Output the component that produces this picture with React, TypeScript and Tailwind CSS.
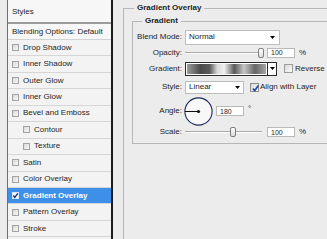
import React from 'react'

const items: { label: string; indent?: boolean; checked?: boolean }[] = [
  { label: 'Drop Shadow' },
  { label: 'Inner Shadow' },
  { label: 'Outer Glow' },
  { label: 'Inner Glow' },
  { label: 'Bevel and Emboss' },
  { label: 'Contour', indent: true },
  { label: 'Texture', indent: true },
  { label: 'Satin' },
  { label: 'Color Overlay' },
  { label: 'Gradient Overlay', checked: true },
  { label: 'Pattern Overlay' },
  { label: 'Stroke' },
]

function Arrow() {
  return (
    <svg width="5" height="3" viewBox="0 0 5 3" className="shrink-0">
      <polygon points="0,0 5,0 2.5,3" fill="#000" />
    </svg>
  )
}

function Check({ color }: { color: string }) {
  return (
    <svg width="9" height="9" viewBox="0 0 9 9" className="absolute inset-0">
      <path d="M1.8 4.4 L3.7 6.6 L7.4 1.6" fill="none" stroke={color} strokeWidth="1.6" />
    </svg>
  )
}

function Slider({ pos }: { pos: number }) {
  return (
    <div className="relative w-[79px] h-[10px] shrink-0">
      <div className="absolute left-0 right-[2px] top-[4px] h-[2px] border-t border-[#a9a9a9] bg-white" />
      <div
        className="absolute top-0 w-[6px] h-[10px] rounded-[2px] border border-[#7d7d7d] bg-gradient-to-b from-white to-[#dcdcdc]"
        style={{ left: pos }}
      />
    </div>
  )
}

function NumBox({ value }: { value: string }) {
  return (
    <div className="w-[28px] h-[10px] shrink-0 bg-white border border-[#b9b9b9] flex items-center pl-[3px] text-[7px] leading-none">
      {value}
    </div>
  )
}

function Label({ children }: { children: React.ReactNode }) {
  return <div className="w-[49px] shrink-0 text-right pr-0 mr-[3px]">{children}</div>
}

export default function App() {
  return (
    <div className="w-[327px] h-[239px] overflow-hidden bg-[#ececec] flex font-['Liberation_Sans',Arial,sans-serif] text-[8px] leading-[10px] text-[#1e1e1e]">
      {/* Styles list */}
      <div className="ml-[7px] w-[106px] h-[260px] shrink-0 border-l border-[#707070] border-r-2 border-r-[#1c1c1c] bg-[#f3f3f3] flex flex-col">
        <div className="h-[24px] shrink-0 border-b-2 border-[#9c9c9c] bg-[#f7f7f7] flex items-center pl-[4px] pt-[2px]">Styles</div>
        <div className="h-[16px] shrink-0 border-b border-[#d2d2d2] bg-[#f7f7f7] flex items-center pl-[4px]">Blending Options: Default</div>
        {items.map(it => (
          <div
            key={it.label}
            className={`h-[16.45px] shrink-0 border-b border-[#d6d6d6] flex items-center gap-[4px] ${it.indent ? 'pl-[15px]' : 'pl-[4px]'} ${it.checked ? 'bg-[#3d8fe8] text-white font-bold' : ''}`}
          >
            <div className={`relative w-[7px] h-[7px] shrink-0 border ${it.checked ? 'bg-white border-[#d8e6f8]' : 'bg-gradient-to-br from-[#d9d9d9] to-[#f8f8f8] border-[#a3a3a3]'}`}>
              {it.checked && (
                <svg width="7" height="7" viewBox="0 0 7 7" className="absolute -left-[1px] -top-[1px]">
                  <path d="M1.3 3.6 L2.8 5.4 L5.8 1.4" fill="none" stroke="#1c2f7a" strokeWidth="1.5" />
                </svg>
              )}
            </div>
            <span>{it.label}</span>
          </div>
        ))}
      </div>

      {/* Options */}
      <div className="flex-1 min-w-0 pl-[10px]">
        <fieldset className="mt-[2px] w-[240px] h-[260px] border-l border-t border-[#b7b7b7]">
          <legend className="ml-[10px] px-[3px] font-bold leading-[12px]">Gradient Overlay</legend>
          <div className="pl-[8px]">
            <fieldset className="mt-[1px] w-[230px] border-l border-t border-b border-[#b7b7b7] pb-[5px]">
              <legend className="ml-[9px] px-[3px] font-bold leading-[12px]">Gradient</legend>
              <div className="flex flex-col">
                <div className="h-[18px] mt-[1px] flex items-center">
                  <Label>Blend Mode:</Label>
                  <div className="w-[95px] h-[15px] bg-white border border-[#bdbdbd] flex items-center justify-between pl-[3px] pr-[4px]">
                    <span>Normal</span>
                    <Arrow />
                  </div>
                </div>
                <div className="h-[13px] flex items-center">
                  <Label>Opacity:</Label>
                  <Slider pos={73} />
                  <div className="ml-[3px]"><NumBox value="100" /></div>
                  <span className="ml-[4px]">%</span>
                </div>
                <div className="h-[19px] flex items-center">
                  <Label>Gradient:</Label>
                  <div className="w-[92px] h-[14px] border border-[#2a2a2a] flex">
                    <div className="flex-1 border border-white bg-[linear-gradient(to_right,#9c9c9c_0%,#4a4a4a_17%,#5c5c5c_29%,#d6d6d6_38%,#f2f2f2_47%,#5a5a5a_60%,#c6c6c6_72%,#666_86%,#a4a4a4_100%)]" />
                    <div className="w-[9px] border-l border-[#2a2a2a] bg-white flex items-center justify-center">
                      <Arrow />
                    </div>
                  </div>
                  <div className="relative ml-[7px] w-[9px] h-[9px] border border-[#9b9b9b] bg-gradient-to-br from-[#dadada] to-[#fafafa]" />
                  <span className="ml-[2px]">Reverse</span>
                </div>
                <div className="h-[18px] flex items-center">
                  <Label>Style:</Label>
                  <div className="w-[59px] h-[13px] bg-white border border-[#bdbdbd] flex items-center justify-between pl-[3px] pr-[3px]">
                    <span>Linear</span>
                    <Arrow />
                  </div>
                  <div className="relative ml-[6px] w-[9px] h-[9px] border border-[#8e8e8e] bg-gradient-to-br from-[#dadada] to-[#fafafa]">
                    <Check color="#2547a8" />
                  </div>
                  <span className="ml-[1px]">Align with Layer</span>
                </div>
                <div className="h-[30px] flex items-center">
                  <Label>Angle:</Label>
                  <svg width="29" height="29" viewBox="0 0 29 29" className="-ml-[1px] shrink-0">
                    <circle cx="14.5" cy="14.5" r="13.6" fill="#f8f8f8" stroke="#1d2b58" strokeWidth="1.1" />
                    <line x1="14.5" y1="14.5" x2="1" y2="14.5" stroke="#111" strokeWidth="1" />
                    <circle cx="14.5" cy="14.5" r="1.6" fill="#111" />
                  </svg>
                  <div className="ml-[3px]"><NumBox value="180" /></div>
                  <span className="ml-[4px] self-start mt-[9px] leading-none">°</span>
                </div>
                <div className="h-[12px] flex items-center">
                  <Label>Scale:</Label>
                  <Slider pos={45} />
                  <div className="ml-[3px]"><NumBox value="100" /></div>
                  <span className="ml-[4px]">%</span>
                </div>
              </div>
            </fieldset>
          </div>
        </fieldset>
      </div>
    </div>
  )
}
